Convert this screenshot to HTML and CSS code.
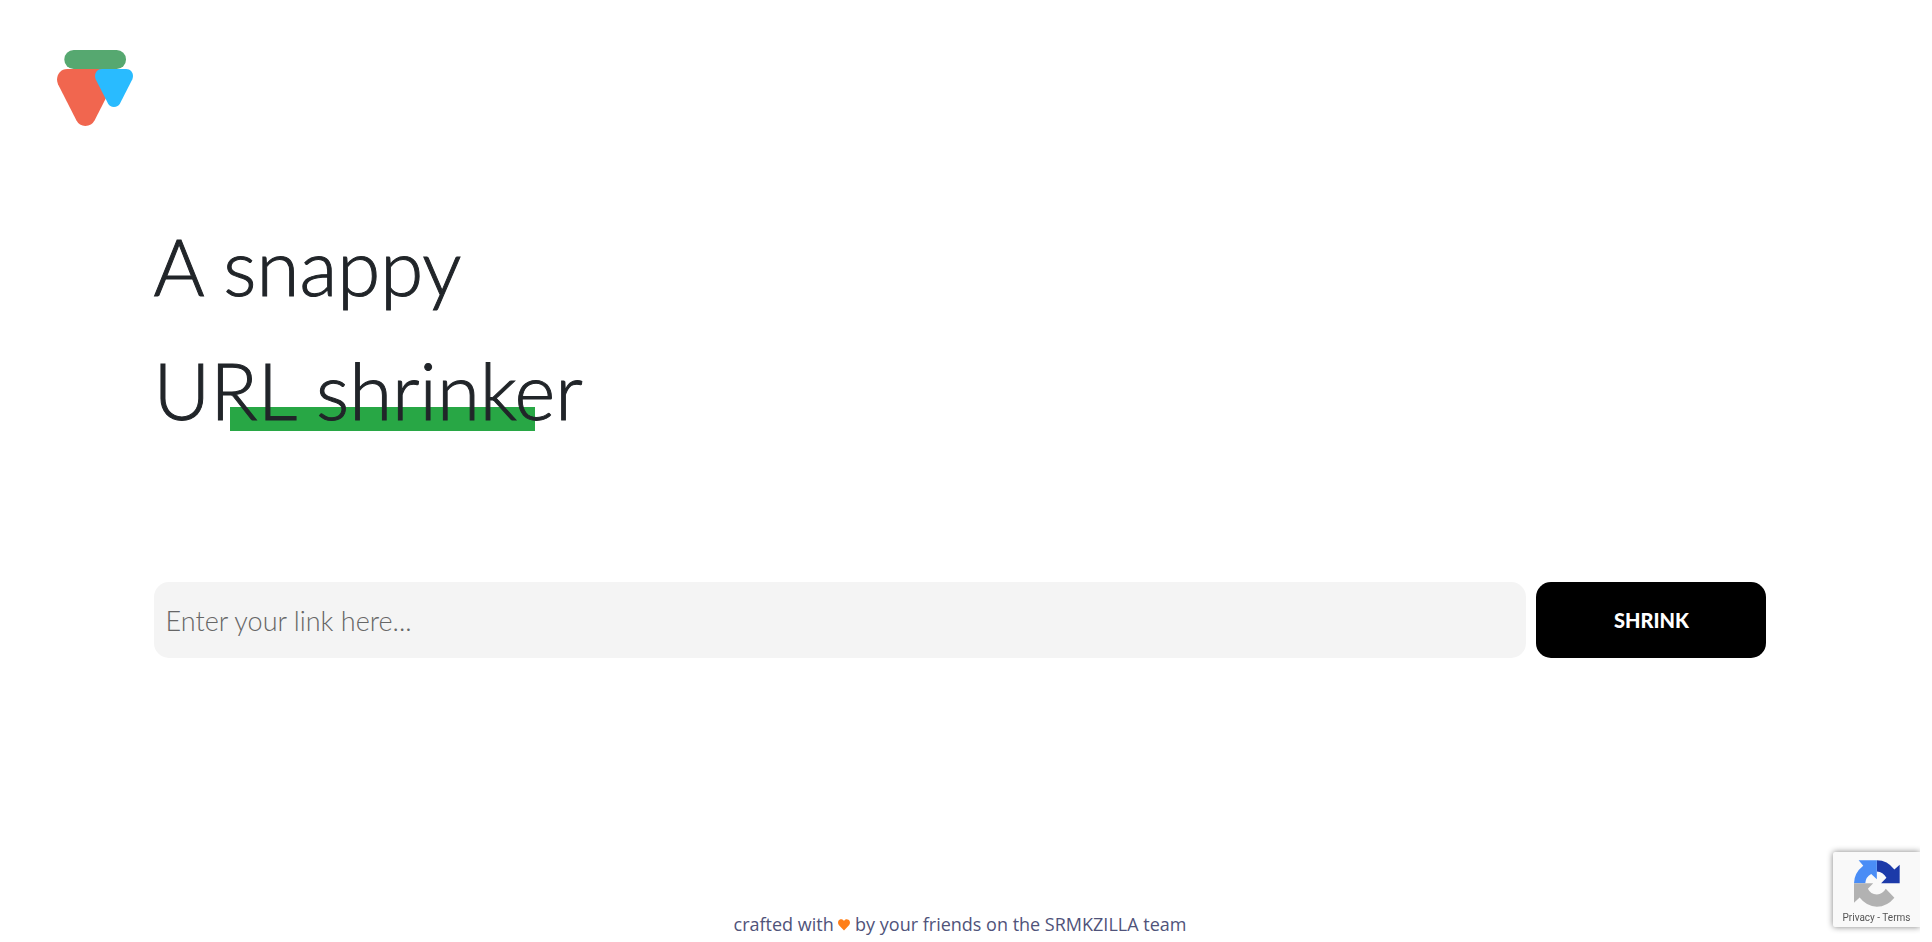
FILE: index.html
```html
<!DOCTYPE html>
<html lang="en">
<head>
<meta charset="utf-8">
<title>URL shrinker</title>
<link rel="stylesheet" href="styles.css">
</head>
<body>
<div class="page">
  <header class="header">
    <svg class="logo" viewBox="0 0 228 228" role="img" aria-label="Home">
      <defs>
        <path id="wedge" d="M31 0H140C164 0 177 24 168 46L113 154Q104 171 85 171Q67 171 58 154L3 46C-6 24 7 0 31 0Z"/>
      </defs>
      <rect x="22" width="185" height="57" rx="28" fill="#56a870"/>
      <use href="#wedge" y="57" fill="#f1664f"/>
      <use href="#wedge" transform="translate(114 57) scale(.667)" fill="#29bbff"/>
    </svg>
  </header>
  <main class="main">
    <h1 class="title"><span class="line">A snappy</span><span class="line marked">URL shrinker</span></h1>
    <form class="form">
      <input class="link" type="text" aria-label="Link" placeholder="Enter your link here...">
      <button class="shrink" type="button">SHRINK</button>
    </form>
  </main>
  <footer class="footer">crafted with
    <svg class="heart" viewBox="0 0 12 12" aria-label="love"><path fill="#ff7f18" d="M6 11.6L1 6.3C-.5 4.500-.2 1.900 1.500.8C3.100-.1 5 .4 6 2C7-.0 9 .0 10.500.8C12.200 1.900 12.500 4.500 11 6.300Z"/></svg>
    by your friends on the SRMKZILLA team</footer>
</div>
<aside class="badge">
  <svg class="captcha" viewBox="126 80 139 142" aria-hidden="true">
    <path fill="#1c3aa9" d="M195 81Q227 81 248 109L264 94V150H208L224 134Q214 116 195 115Z"/>
    <path fill="#4a8df6" d="M140 81H195V138L178 122Q161 131 160 150H126Q126 119 154 97Z"/>
    <path fill="#b2b2b2" d="M126 150H184L168 167Q176 184 195 184Q213 183 222 167L248 194Q226 221 195 221Q164 220 143 193L126 209Z"/>
  </svg>
  <div class="terms"><a href="#">Privacy</a> - <a href="#">Terms</a></div>
</aside>
</body>
</html>
```

FILE: styles.css
```css
* { box-sizing: border-box; }
body {
  margin: 0;
  padding-right: 12px;
  background: #fff;
  color: #212529;
  font-family: Lato, "Open Sans", sans-serif;
}
.page {
  display: flex;
  flex-direction: column;
  min-height: 100vh;
}
.header { padding: 50px 57px 0; }
.logo { display: block; width: 76px; height: 76px; }
.main { padding: 78px 8% 0; }
.title {
  display: flex;
  flex-direction: column;
  align-items: flex-start;
  margin: 0;
  font-size: 78px;
  font-weight: 300;
  line-height: 124px;
  -webkit-text-stroke: 1px #212529;
}
.marked { position: relative; z-index: 0; }
.marked::before {
  content: "";
  position: absolute;
  z-index: -1;
  left: 76px;
  right: 48px;
  top: 79px;
  height: 24px;
  background: #28a745;
}
.form { display: flex; gap: 10px; margin-top: 130px; }
.link, .shrink {
  height: 76px;
  border: 0;
  border-radius: 15px;
}
.link {
  flex: 1;
  min-width: 0;
  padding: 0 12px;
  background: #f4f4f4;
  font: 300 27px Lato, sans-serif;
}
.link::placeholder { color: #666; opacity: 1; }
.shrink {
  width: 230px;
  background: #000;
  color: #fff;
  font: 900 20px Lato, sans-serif;
}
.footer {
  margin-top: auto;
  padding-bottom: 6px;
  text-align: center;
  color: #50537a;
  font: 18px/24px "Open Sans", sans-serif;
}
.heart { width: 12px; height: 12px; }
.badge {
  position: fixed;
  right: 12px;
  bottom: 15px;
  width: 87px;
  height: 75px;
  padding-top: 8px;
  border-radius: 2px 0 0 2px;
  background: #f9f9f9;
  box-shadow: 0 0 6px gray;
  clip-path: inset(-8px 0 -8px -8px);
  text-align: center;
}
.captcha { display: block; width: 46px; height: 47px; margin: 0 auto; }
.terms { color: #555; font: 10px/22px Roboto, sans-serif; }
.terms a { color: inherit; text-decoration: none; }
```
